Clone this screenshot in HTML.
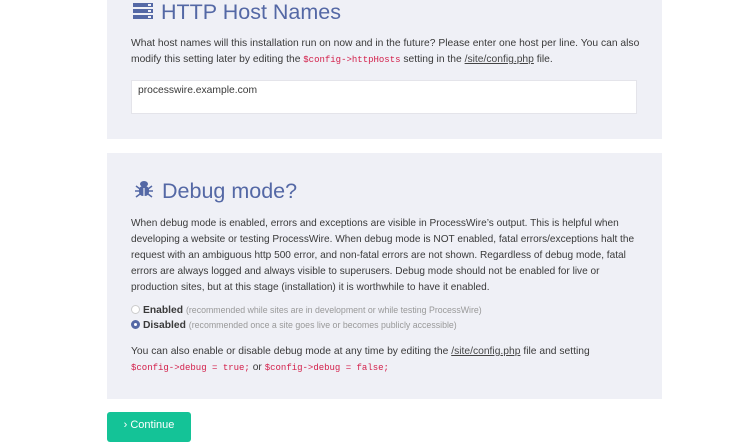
<!DOCTYPE html>
<html><head><style>
body{margin:0;width:742px;height:434px;overflow:hidden;background:#fff;font-family:"Liberation Sans",sans-serif;color:#3a3a3a;font-size:10.3px;}
.p{position:absolute;left:107px;width:555px;background:#eff0f6;}
.h{position:absolute;color:#5468a5;font-size:21.5px;white-space:nowrap;}
.t{position:absolute;left:24px;width:512px;line-height:16px;}
.nw{white-space:nowrap}
code{font-family:"Liberation Mono",monospace;color:#d3204b;font-size:9px;}
u{color:#444}
.g{color:#999;font-size:8.8px}
.r{display:inline-block;width:9px;height:9px;border-radius:50%;border:1px solid #ccc;background:#fff;vertical-align:-1px;margin-right:3px;box-sizing:border-box}
.r.on{border:3px solid #5468a5;background:#fff}
</style></head><body>
<div class="p" style="top:0;height:139px">
 <svg style="position:absolute;left:26px;top:3px" width="20" height="17" viewBox="0 0 20 17"><rect x="0" y="0" width="20" height="4" fill="#5468a5"/><rect x="0" y="6" width="20" height="4" fill="#5468a5"/><rect x="0" y="12" width="20" height="4" fill="#5468a5"/><rect x="15" y="1" width="3" height="2" fill="#eff0f6"/><rect x="15" y="7" width="3" height="2" fill="#eff0f6"/><rect x="15" y="13" width="3" height="2" fill="#eff0f6"/></svg>
 <div class="h" style="left:54px;top:0px">HTTP Host Names</div>
 <div class="t" style="top:36px">What host names will this installation run on now and in the future? Please enter one host per line. You can also modify this setting later by editing the <code>$config-&gt;httpHosts</code> setting in the <u>/site/config.php</u> file.</div>
 <div style="position:absolute;left:24px;top:80px;width:506px;height:34px;background:#fff;border:1px solid #e4e4ea;box-sizing:border-box;padding:4px 6px">processwire.example.com</div>
</div>
<div class="p" style="top:153px;height:246px">
 <svg style="position:absolute;left:28px;top:27px" width="18" height="18" viewBox="0 0 18 18" fill="#5468a5"><ellipse cx="9" cy="4" rx="4" ry="3"/><rect x="4" y="6" width="10" height="10" rx="4"/><path d="M1 6l4 3M17 6l-4 3M0 11h5M18 11h-5M1 17l4-3M17 17l-4-3" stroke="#5468a5" stroke-width="1.5"/><rect x="8.4" y="8" width="1.2" height="8" fill="#eff0f6"/></svg>
 <div class="h" style="left:55px;top:26px">Debug mode?</div>
 <div class="t nw" style="top:63px;font-size:10.1px">When debug mode is enabled, errors and exceptions are visible in ProcessWire’s output. This is helpful when<br>developing a website or testing ProcessWire. When debug mode is NOT enabled, fatal errors/exceptions halt the<br>request with an ambiguous http 500 error, and non-fatal errors are not shown. Regardless of debug mode, fatal<br>errors are always logged and always visible to superusers. Debug mode should not be enabled for live or<br>production sites, but at this stage (installation) it is worthwhile to have it enabled.</div>
 <div class="t nw" style="top:150px;line-height:15px"><span class="r"></span><b>Enabled</b> <span class="g">(recommended while sites are in development or while testing ProcessWire)</span><br><span class="r on"></span><b>Disabled</b> <span class="g">(recommended once a site goes live or becomes publicly accessible)</span></div>
 <div class="t nw" style="top:191px">You can also enable or disable debug mode at any time by editing the <u>/site/config.php</u> file and setting<br><code>$config-&gt;debug = true;</code> or <code>$config-&gt;debug = false;</code></div>
</div>
<div style="position:absolute;left:107px;top:412px;width:84px;height:30px;background:#14c397;border-radius:3px;color:#fff;font-size:11px;line-height:26px;text-align:center">› Continue</div>
</body></html>
